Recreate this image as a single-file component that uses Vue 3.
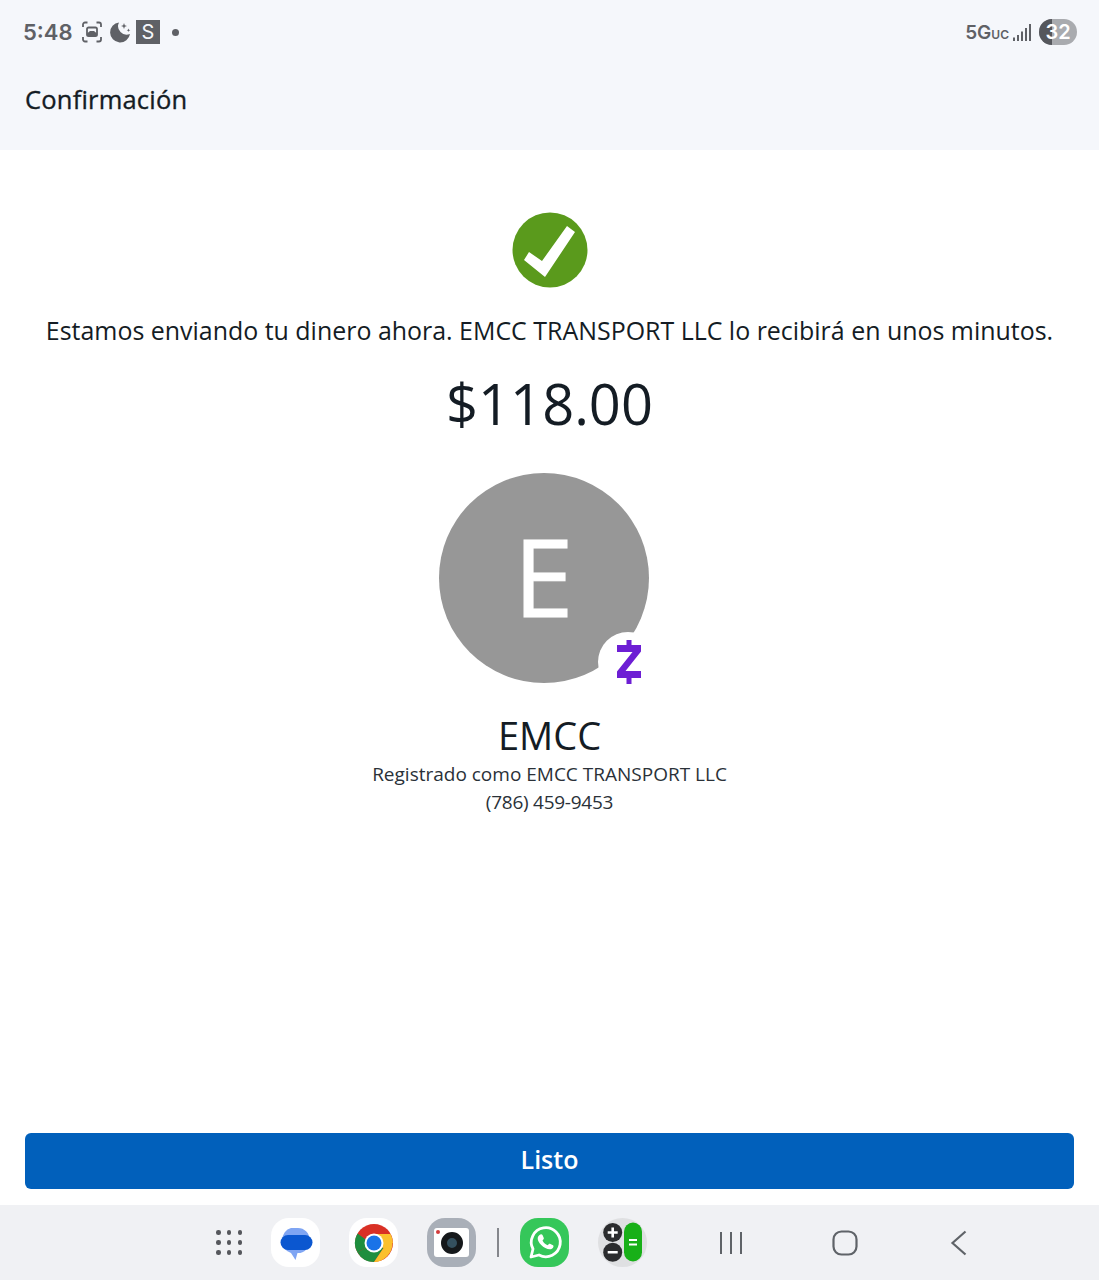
<script setup>
const dots = Array.from({ length: 9 })
</script>

<template>
  <div class="page">
    <header class="top">
      <div class="status">
        <div class="status-left">
          <span class="time">5:48</span>
          <svg class="ic-shot" width="22" height="22" viewBox="0 0 22 22" fill="none" stroke="#5f6166" stroke-width="1.8">
            <path d="M2 6V3.500A2 2 0 0 1 4 1.500H6.500M15.500 1.500H18A2 2 0 0 1 20 3.500V6M20 16V18.500A2 2 0 0 1 18 20.500H15.500M6.500 20.500H4A2 2 0 0 1 2 18.500V16" />
            <rect x="6" y="6.500" width="10" height="8.500" rx="1.600" />
            <path d="M6 12.500L9 10h4l3 2.500V15H6z" fill="#5f6166" stroke="none" />
          </svg>
          <svg class="ic-moon" width="22" height="22" viewBox="0 0 22 22" fill="#5f6166">
            <path d="M10 1.500A10 10 0 1 0 21 13 8.500 8.500 0 0 1 10 1.500Z" />
            <path d="M15 2l.8 2.200L18 5l-2.200.8L15 8l-.8-2.200L12 5l2.200-.8zM19.500 7.500l.5 1.300 1.300.5-1.300.5-.5 1.300-.5-1.300-1.300-.5 1.300-.5z" />
          </svg>
          <span class="s-badge">S</span>
          <span class="dot"></span>
        </div>
        <div class="status-right">
          <span class="net">5G<small>UC</small></span>
          <svg width="18" height="17" viewBox="0 0 18 17" fill="#5f6166">
            <rect x="0" y="13.500" width="2" height="3.500" />
            <rect x="4" y="11" width="2" height="6" />
            <rect x="8" y="7.500" width="2" height="9.500" />
            <rect x="12" y="4" width="2" height="13" />
            <rect x="16" y="0" width="2" height="17" />
          </svg>
          <span class="battery"><span class="battery-fill"></span><span class="battery-num">32</span></span>
        </div>
      </div>
      <h1 class="title">Confirmación</h1>
    </header>

    <main class="content">
      <svg class="check" width="76" height="76" viewBox="0 0 76 76">
        <circle cx="38" cy="38" r="37.500" fill="#5a9a1c" />
        <path d="M12 48L17 40L30 49L55 14L63 20L33 65Z" fill="#fff" />
      </svg>
      <p class="message">Estamos enviando tu dinero ahora. EMCC TRANSPORT LLC lo recibirá en unos minutos.</p>
      <div class="amount">$118.00</div>
      <div class="avatar-wrap">
        <div class="avatar">E</div>
        <div class="zelle">
          <svg width="26" height="44" viewBox="0 0 26 44" fill="#6d1ed4">
            <path d="M10.500 0h5v5H25v6.500L9.500 31H25v7h-9.500v6h-5v-6H1v-6.500L16.500 12H1V5h9.500z" />
          </svg>
        </div>
      </div>
      <div class="name">EMCC</div>
      <div class="sub">Registrado como EMCC TRANSPORT LLC</div>
      <div class="sub phone">(786) 459-9453</div>
      <button class="done">Listo</button>
    </main>

    <nav class="nav">
      <div class="apps">
        <div class="grid"><i v-for="(d, i) in dots" :key="i"></i></div>
        <div class="app white">
          <svg width="34" height="36" viewBox="0 0 34 36">
            <path d="M12 3h7a11.500 11.500 0 0 1 11.500 11.500v2A11.500 11.500 0 0 1 19 28h-.5l-2 7-4.500-7a11.500 11.500 0 0 1-8.500-11.500v-2A11.500 11.500 0 0 1 12 3Z" fill="#7fa5f3" />
            <rect x="1.500" y="10" width="32" height="15" rx="7.500" fill="#0b57d0" />
          </svg>
        </div>
        <div class="app white">
          <svg width="40" height="40" viewBox="0 0 40 40">
            <circle cx="20" cy="20" r="19" fill="#d93025" />
            <path d="M20 20L3.500 29.500A19 19 0 0 1 3.500 10.500L11 16Z" fill="#1e8e3e" />
            <path d="M20 20L3.500 29.500A19 19 0 0 0 20 39L29.500 25Z" fill="#1e8e3e" />
            <path d="M20 20H38.500A19 19 0 0 1 20 39L29.500 25Z" fill="#fbc02d" />
            <path d="M20 11H36.500A19 19 0 0 1 39 20H29Z" fill="#fbc02d" />
            <circle cx="20" cy="20" r="9.500" fill="#fff" />
            <circle cx="20" cy="20" r="7.500" fill="#1a73e8" />
          </svg>
        </div>
        <div class="app camera">
          <div class="cam-card">
            <span class="cam-red"></span>
            <span class="cam-lens"></span>
          </div>
        </div>
        <span class="sep"></span>
        <div class="app whatsapp">
          <svg width="36" height="36" viewBox="0 0 36 36" fill="none">
            <path d="M4 32l2-8A14.500 14.500 0 1 1 12 30Z" stroke="#fff" stroke-width="2.800" stroke-linejoin="round" />
            <path d="M12.500 10c1-1 2.500-1 3 0l1.300 3c.2.600-.2 1.300-1.300 2.500 1 2 2.500 3.500 5 4.800 1.200-1.300 1.800-1.800 2.500-1.500l3 1.500c.8.500.6 1.700-.2 2.700-1.500 1.800-4.500 1.500-7.500 0-3-1.600-5.500-4-7-7-1-2.300-.8-4.500 1.200-6Z" fill="#fff" />
          </svg>
        </div>
        <svg class="calc" width="49" height="49" viewBox="0 0 49 49">
          <circle cx="24.500" cy="24.500" r="24.500" fill="#dfe0e2" />
          <circle cx="14.700" cy="14.500" r="9.500" fill="#2b2c2e" />
          <circle cx="14.700" cy="34.200" r="9.500" fill="#2b2c2e" />
          <rect x="26" y="4.500" width="18" height="39" rx="9" fill="#18b018" />
          <path d="M9.700 14.500h10M14.700 9.500v10M9.700 34.200h10" stroke="#fff" stroke-width="2.600" />
          <path d="M31 22h8M31 26.500h8" stroke="#fff" stroke-width="2" />
        </svg>
      </div>
      <div class="keys">
        <svg width="26" height="24" viewBox="0 0 26 24" stroke="#5f6368" stroke-width="2" fill="none">
          <path d="M3 1v22M13 1v22M23 1v22" />
        </svg>
        <svg width="26" height="26" viewBox="0 0 26 26" stroke="#5f6368" stroke-width="2.200" fill="none">
          <rect x="1.500" y="1.500" width="23" height="23" rx="8" />
        </svg>
        <svg width="18" height="26" viewBox="0 0 18 26" stroke="#5f6368" stroke-width="2.200" fill="none">
          <path d="M15.500 1.500L2.500 13l13 11.500" />
        </svg>
      </div>
    </nav>
  </div>
</template>

<style>
html, body { margin: 0; background: #fff; }
</style>

<style scoped>
.page {
  width: 1099px;
  height: 1280px;
  display: flex;
  flex-direction: column;
  font-family: "Open Sans", "Noto Sans", sans-serif;
  color: #141c24;
  overflow: hidden;
}
.top {
  height: 150px;
  background: #f5f7fb;
  box-sizing: border-box;
  padding: 15px 22px 0 23px;
}
.status {
  height: 34px;
  display: flex;
  justify-content: space-between;
  align-items: center;
}
.status-left, .status-right { display: flex; align-items: center; }
.time {
  font-family: Inter, sans-serif;
  font-size: 22px;
  font-weight: 600;
  color: #5f6166;
  width: 58px;
}
.ic-moon { margin-left: 6px; }
.s-badge {
  margin-left: 5px;
  width: 24px;
  height: 24px;
  background: #5f6166;
  color: #f5f7fb;
  font-family: Inter, sans-serif;
  font-size: 20px;
  line-height: 24px;
  text-align: center;
}
.dot {
  width: 7px;
  height: 7px;
  margin-left: 12px;
  border-radius: 50%;
  background: #5f6166;
}
.net {
  font-family: Inter, sans-serif;
  font-size: 19px;
  font-weight: 600;
  color: #5f6166;
  margin-right: 4px;
}
.net small { font-size: 12px; }
.battery {
  margin-left: 8px;
  width: 38px;
  height: 26px;
  border-radius: 13px;
  background: #a9abaf;
  position: relative;
  overflow: hidden;
  display: block;
}
.battery-fill {
  position: absolute;
  left: 0;
  top: 0;
  bottom: 0;
  width: 13px;
  background: #55575c;
}
.battery-num {
  position: absolute;
  inset: 0;
  font-family: Inter, sans-serif;
  font-size: 20px;
  font-weight: 600;
  line-height: 26px;
  text-align: center;
  color: #fff;
}
.title {
  margin: 33px 0 0 2px;
  font-size: 25.500px;
  font-weight: 400;
  letter-spacing: 0.2px;
  -webkit-text-stroke: 0.35px #141c24;
  line-height: 34px;
}
.content {
  flex: 1;
  min-height: 0;
  display: flex;
  flex-direction: column;
  align-items: center;
  padding: 62px 25px 16px;
}
.check { flex: none; }
.message {
  margin: 23px 0 0;
  font-size: 24.950px;
  line-height: 38px;
  white-space: nowrap;
}
.amount {
  margin-top: 16px;
  font-size: 56px;
  line-height: 76px;
}
.avatar-wrap {
  position: relative;
  width: 222px;
  height: 210px;
  margin-top: 32px;
  flex: none;
}
.avatar {
  width: 210px;
  height: 210px;
  border-radius: 50%;
  background: #979797;
  color: #fff;
  font-size: 108px;
  -webkit-text-stroke: 1px #fff;
  line-height: 206px;
  text-align: center;
}
.zelle {
  position: absolute;
  left: 159px;
  top: 159px;
  width: 60px;
  height: 60px;
  box-sizing: border-box;
  padding-left: 2px;
  border-radius: 50%;
  background: #fff;
  display: flex;
  align-items: center;
  justify-content: center;
}
.name {
  margin-top: 26px;
  font-size: 38px;
  line-height: 52px;
}
.sub {
  font-size: 19px;
  line-height: 27px;
  color: #2a3138;
}
.phone { letter-spacing: -0.25px; margin-top: 1px; }
.done {
  margin-top: auto;
  width: 100%;
  height: 56px;
  flex: none;
  border: none;
  border-radius: 6px;
  background: #0160bb;
  color: #fff;
  font-family: inherit;
  font-size: 25px;
  font-weight: 600;
  padding: 0 0 5px;
}
.nav {
  height: 75px;
  background: #f0f1f4;
  display: flex;
  align-items: center;
  padding-left: 216px;
}
.apps { display: flex; align-items: center; }
.grid {
  width: 26px;
  display: grid;
  grid-template-columns: repeat(3, 4.500px);
  justify-content: space-between;
  row-gap: 5.500px;
}
.grid i {
  width: 4.500px;
  height: 4.500px;
  border-radius: 50%;
  background: #55575c;
}
.app {
  width: 49px;
  height: 49px;
  border-radius: 18px;
  display: flex;
  align-items: center;
  justify-content: center;
  flex: none;
}
.grid + .app { margin-left: 29px; }
.app + .app { margin-left: 29px; }
.white { background: #fff; }
.camera { background: #a9afb8; }
.cam-card {
  width: 35px;
  height: 29px;
  background: #fff;
  border-radius: 3px;
  position: relative;
}
.cam-red {
  position: absolute;
  left: 2px;
  top: 2px;
  width: 4px;
  height: 4px;
  border-radius: 50%;
  background: #d23b3b;
}
.cam-lens {
  position: absolute;
  left: 7px;
  top: 4px;
  width: 22px;
  height: 22px;
  box-sizing: border-box;
  border-radius: 50%;
  background: #34505f;
  border: 6px solid #15181b;
}
.sep {
  width: 2px;
  height: 29px;
  margin: 0 21px 0 21px;
  background: #85878c;
}
.whatsapp { background: #35c75a; }
.calc { margin-left: 29px; flex: none; }
.keys {
  display: flex;
  align-items: center;
  gap: 0;
  margin-left: 71px;
}
.keys svg:nth-child(2) { margin-left: 88px; }
.keys svg:nth-child(3) { margin-left: 92px; }
</style>
